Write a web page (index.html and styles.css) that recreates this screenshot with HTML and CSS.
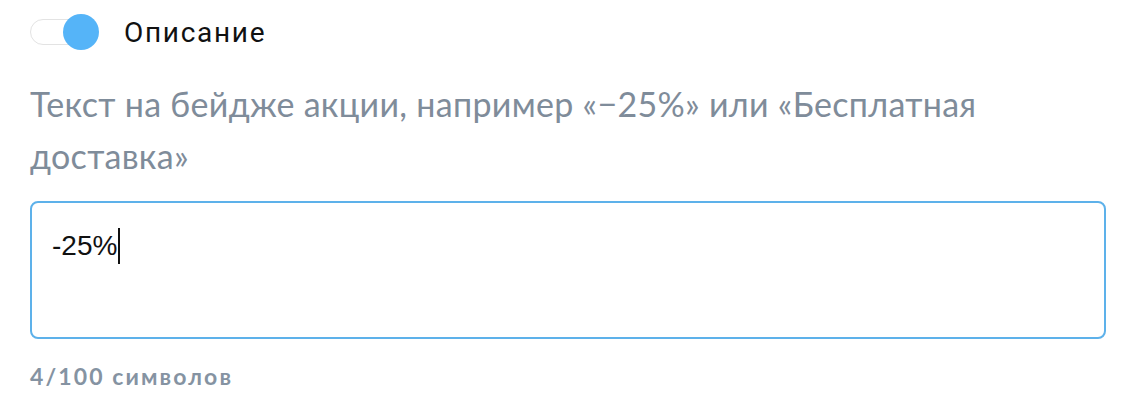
FILE: index.html
```html
<!DOCTYPE html>
<html lang="ru">
<head>
<meta charset="utf-8">
<link rel="stylesheet" href="styles.css">
</head>
<body>
<div class="field">
  <div class="toggle-row">
    <span class="switch"><span class="track"></span><span class="thumb"></span></span>
    <span class="title">Описание</span>
  </div>
  <p class="hint">Текст на бейдже акции, например «−25%» или «Бесплатная доставка»</p>
  <div class="input"><span class="value">-25%</span><span class="caret"></span></div>
  <div class="counter">4/100 символов</div>
</div>
</body>
</html>
```
FILE: styles.css
```css
html, body {
  margin: 0;
  padding: 0;
  background: #ffffff;
}
.field {
  width: 1076px;
  padding: 0 0 0 30px;
}
.toggle-row {
  display: flex;
  align-items: center;
  height: 36px;
  margin-top: 14px;
}
.switch {
  position: relative;
  width: 70px;
  height: 36px;
  flex: none;
}
.track {
  position: absolute;
  left: 0;
  top: 5px;
  width: 64px;
  height: 26px;
  box-sizing: border-box;
  border: 1.5px solid #e3e3e3;
  border-radius: 13px;
  background: #fff;
}
.thumb {
  position: absolute;
  left: 33px;
  top: 0;
  width: 36px;
  height: 36px;
  border-radius: 50%;
  background: #55b4f8;
}
.title {
  margin-left: 24px;
  font-family: Roboto, "Liberation Sans", sans-serif;
  font-size: 28px;
  color: #111;
  letter-spacing: 1.7px;
}
.hint {
  margin: 28px 0 0;
  max-width: 1010px;
  font-family: Lato, "Noto Sans", sans-serif;
  font-size: 34px;
  letter-spacing: 0.3px;
  line-height: 52px;
  color: #7f8c9a;
}
.input {
  margin-top: 19px;
  height: 138px;
  box-sizing: border-box;
  border: 2px solid #5db1ea;
  border-radius: 8px;
  padding: 25px 20px;
  display: flex;
  align-items: flex-start;
}
.value {
  font-family: "Liberation Sans", Arial, sans-serif;
  font-size: 28px;
  line-height: 36px;
  color: #111;
}
.caret {
  width: 2px;
  height: 36px;
  background: #111;
  margin-left: 1px;
}
.counter {
  margin-top: 23px;
  font-family: Lato, "Noto Sans", sans-serif;
  font-weight: 700;
  font-size: 23px;
  letter-spacing: 2.1px;
  color: #8593a2;
}
```
